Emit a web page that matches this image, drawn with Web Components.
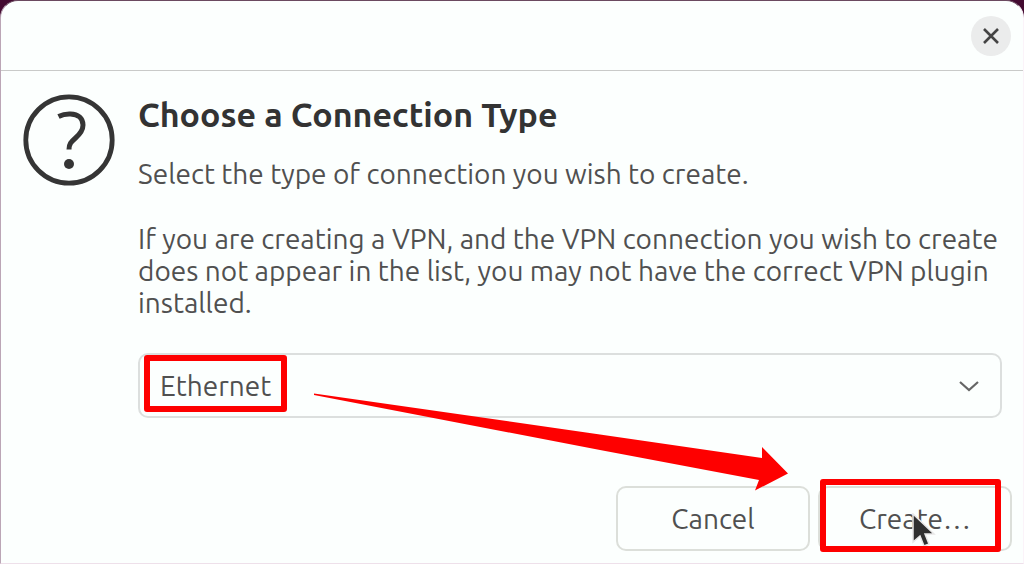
<!DOCTYPE html>
<html lang="en">
<head>
  <meta charset="UTF-8">
  <meta name="viewport" content="width=device-width, initial-scale=1.0">
  <title>Choose a Connection Type</title>
  <style>
    body {
      margin: 0;
      background: #430a30;
      color: #505050;
      font-family: Ubuntu, "Noto Sans", sans-serif;
      font-size: 28px;
      line-height: 32px;
    }
  </style>
</head>
<body>
  <dialog-window>
    <message-icon slot="icon"></message-icon>
    <connection-message heading="Choose a Connection Type">
      <p>Select the type of connection you wish to create.</p>
      <p>If you are creating a VPN, and the VPN connection you wish to create does not appear in the list, you may not have the correct VPN plugin installed.</p>
    </connection-message>
    <connection-select></connection-select>
    <dialog-button slot="actions">Cancel</dialog-button>
    <dialog-button slot="actions" marked>Create…</dialog-button>
    <arrow-mark slot="overlay"></arrow-mark>
  </dialog-window>

  <script>
    class DialogWindow extends HTMLElement {
      constructor() {
        super();
        this.attachShadow({ mode: 'open' });
      }

      connectedCallback() {
        this.shadowRoot.innerHTML = `
          <style>
            :host {
              display: flex;
              flex-direction: column;
              position: relative;
              box-sizing: border-box;
              min-height: 100vh;
              background: #fcfffe;
              border: 1px solid #bba6b6;
              border-top-color: #6b4a60;
              border-right-color: #fbf3f9;
              border-bottom-color: #eee0ea;
              border-radius: 18px 18px 0 0;
            }

            header {
              display: flex;
              justify-content: flex-end;
              align-items: center;
              box-sizing: border-box;
              height: 70px;
              padding: 0 12px;
              border-bottom: 1px solid #c9cac9;
            }

            .close {
              display: flex;
              align-items: center;
              justify-content: center;
              width: 40px;
              height: 40px;
              padding: 0;
              border: none;
              border-radius: 50%;
              background: #ebecec;
            }

            .body {
              display: flex;
              gap: 23px;
              padding: 23px 21px 0 22px;
            }

            .content {
              flex: 1;
              min-width: 0;
            }

            footer {
              display: flex;
              justify-content: flex-end;
              gap: 8px;
              margin-top: auto;
              padding: 0 11px 12px;
            }
          </style>
          <header>
            <button class="close" aria-label="Close">
              <svg width="16" height="16" viewBox="0 0 16 16" fill="none" stroke="#444" stroke-width="2.6">
                <path d="M1 1L15 15M15 1L1 15"/>
              </svg>
            </button>
          </header>
          <div class="body">
            <slot name="icon"></slot>
            <div class="content"><slot></slot></div>
          </div>
          <footer><slot name="actions"></slot></footer>
          <slot name="overlay"></slot>
        `;
      }
    }

    class MessageIcon extends HTMLElement {
      constructor() {
        super();
        this.attachShadow({ mode: 'open' });
      }

      connectedCallback() {
        this.shadowRoot.innerHTML = `
          <style>
            :host { display: block; width: 92px; height: 92px; flex: none; }
            svg { display: block; }
          </style>
          <svg width="92" height="92" viewBox="0 0 92 92" fill="none" stroke="#353535">
            <circle cx="46" cy="46" r="43.2" stroke-width="4.8"/>
            <path d="M35.500 22.500C39.500 20.500 43.500 19.800 47.500 20C55.500 20.300 60 24.500 60 31C60 37 56.500 40.500 52.500 44C48 48 46 50 46 55.500" stroke-width="5"/>
            <circle cx="46" cy="70" r="5" fill="#353535" stroke="none"/>
          </svg>
        `;
      }
    }

    class ConnectionMessage extends HTMLElement {
      constructor() {
        super();
        this.attachShadow({ mode: 'open' });
      }

      connectedCallback() {
        this.shadowRoot.innerHTML = `
          <style>
            :host { display: block; }

            h1 {
              margin: 0 0 24px;
              color: #333;
              font-size: 34px;
              font-weight: bold;
              line-height: 40px;
            }

            ::slotted(p) { margin: 0 0 33px; }
          </style>
          <h1>${this.getAttribute('heading')}</h1>
          <slot></slot>
        `;
      }
    }

    class ConnectionSelect extends HTMLElement {
      constructor() {
        super();
        this.attachShadow({ mode: 'open' });
        this.types = ['Ethernet', 'Wi-Fi', 'VPN', 'Bridge'];
      }

      connectedCallback() {
        this.shadowRoot.innerHTML = `
          <style>
            :host { display: grid; position: relative; margin-top: 34px; }

            select, svg { grid-area: 1 / 1; }

            select {
              appearance: none;
              box-sizing: border-box;
              width: 100%;
              height: 65px;
              padding: 0 20px;
              border: 2px solid #dcdfde;
              border-radius: 10px;
              background: #fcfffe;
              color: inherit;
              font: inherit;
            }

            svg {
              align-self: center;
              justify-self: end;
              margin-right: 23px;
              pointer-events: none;
            }

            .mark {
              position: absolute;
              top: 2px;
              left: 6px;
              box-sizing: border-box;
              width: 143px;
              height: 57px;
              border: 6px solid #fe0000;
              border-radius: 3px;
              pointer-events: none;
            }
          </style>
          <select aria-label="Connection type">
            ${this.types.map(t => `<option>${t}</option>`).join('')}
          </select>
          <svg width="20" height="12" viewBox="0 0 20 12" fill="none" stroke="#666" stroke-width="2.2">
            <path d="M1 2L10 10L19 2"/>
          </svg>
          <div class="mark"></div>
        `;
      }
    }

    class DialogButton extends HTMLElement {
      constructor() {
        super();
        this.attachShadow({ mode: 'open' });
      }

      connectedCallback() {
        const marked = this.hasAttribute('marked');
        this.shadowRoot.innerHTML = `
          <style>
            :host { display: block; position: relative; }

            button {
              display: block;
              box-sizing: border-box;
              width: 194px;
              height: 65px;
              padding: 0;
              border: 2px solid #dcdfda;
              border-radius: 10px;
              background: #fcfffe;
              color: inherit;
              font: inherit;
            }

            .mark {
              position: absolute;
              top: -7px;
              left: 2px;
              box-sizing: border-box;
              width: 181px;
              height: 73px;
              border: 6px solid #fe0000;
              border-radius: 3px;
              pointer-events: none;
            }

            .pointer {
              position: absolute;
              top: 27px;
              left: 94px;
              pointer-events: none;
            }
          </style>
          <button><slot></slot></button>
          ${marked ? `
            <svg class="pointer" width="24" height="36" viewBox="0 0 24 36">
              <path d="M1 1V29L8 23L12 33L17 31L13 21H22Z" fill="#303030" stroke="#e8e8e8" stroke-width="1.5"/>
            </svg>
            <div class="mark"></div>
          ` : ''}
        `;
      }
    }

    class ArrowMark extends HTMLElement {
      constructor() {
        super();
        this.attachShadow({ mode: 'open' });
      }

      connectedCallback() {
        this.shadowRoot.innerHTML = `
          <style>
            :host {
              display: block;
              position: absolute;
              right: 234px;
              bottom: 71px;
              pointer-events: none;
            }
            svg { display: block; }
          </style>
          <svg width="476" height="100" viewBox="313 392 476 100" fill="#fe0000">
            <path d="M314 393.500L600 434.500L762 458L762 447L788 473.500L755 490.500L759 480L600 450L314 395Z"/>
          </svg>
        `;
      }
    }

    customElements.define('dialog-window', DialogWindow);
    customElements.define('message-icon', MessageIcon);
    customElements.define('connection-message', ConnectionMessage);
    customElements.define('connection-select', ConnectionSelect);
    customElements.define('dialog-button', DialogButton);
    customElements.define('arrow-mark', ArrowMark);
  </script>
</body>
</html>
